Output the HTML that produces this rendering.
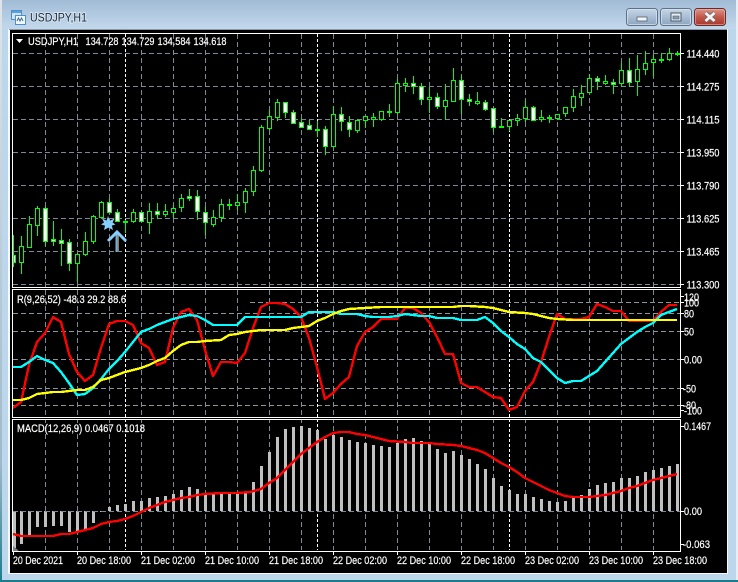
<!DOCTYPE html>
<html><head><meta charset="utf-8"><title>USDJPY,H1</title>
<style>
html,body{margin:0;padding:0;background:#bcd6ec}
svg{display:block}
text{font-family:"Liberation Sans",sans-serif;font-size:11px;fill:#fff;stroke:#fff;stroke-width:.2px}
</style></head><body>
<svg xmlns="http://www.w3.org/2000/svg" width="738" height="582" viewBox="0 0 738 582">
<defs>
<linearGradient id="tb" x1="0" y1="0" x2="0" y2="1"><stop offset="0" stop-color="#a2bbd6"/><stop offset="1" stop-color="#c2d8ec"/></linearGradient>
<linearGradient id="btn" x1="0" y1="0" x2="0" y2="1"><stop offset="0" stop-color="#c6d6e6"/><stop offset=".5" stop-color="#a9bed4"/><stop offset="1" stop-color="#8aa3bf"/></linearGradient>
<linearGradient id="cls" x1="0" y1="0" x2="0" y2="1"><stop offset="0" stop-color="#dc9a8e"/><stop offset=".5" stop-color="#c2584a"/><stop offset="1" stop-color="#a8352a"/></linearGradient>
<linearGradient id="lft" x1="0" y1="0" x2="0" y2="1"><stop offset="0" stop-color="#dfe5ea"/><stop offset=".8" stop-color="#9fb8c8"/><stop offset="1" stop-color="#1a7c8c"/></linearGradient>
</defs>

<!-- window chrome -->
<rect width="738" height="582" fill="#bcd6ec"/>
<rect x="0" y="0" width="738" height="29" fill="url(#tb)"/>
<rect x="0" y="0" width="2" height="582" fill="url(#lft)"/>
<rect x="736" y="0" width="2" height="582" fill="#e8eef3"/>
<rect x="2" y="580" width="736" height="2" fill="#1a7c8c"/>
<rect x="2" y="29" width="7" height="551" fill="#bcd6ec"/>
<rect x="8" y="29" width="720" height="545" fill="#fff" opacity=".85"/>
<rect x="9" y="29" width="718" height="1" fill="#8b97a3"/>
<rect x="10" y="30" width="717" height="543" fill="#000"/>

<!-- app icon -->
<g shape-rendering="crispEdges">
<rect x="11.500" y="10.500" width="10" height="9" fill="#cfe3f5" stroke="#4f8fc8"/>
<rect x="12" y="11" width="9" height="2" fill="#5ba0dc"/>
<rect x="15.500" y="15.500" width="10" height="9" fill="#f2f7fb" stroke="#4f8fc8"/>
</g>
<path d="M17 21l1.500-3 1.500 3 1.500-3 1.500 3" fill="none" stroke="#3b6f9e"/>

<!-- title -->
<text x="30" y="21.500" textLength="57" lengthAdjust="spacingAndGlyphs" style="font-size:12px;fill:#1c2733;stroke:#d6e6f4;stroke-width:2px;paint-order:stroke">USDJPY,H1</text>

<!-- buttons -->
<rect x="626.500" y="8.500" width="31" height="17" rx="3" fill="url(#btn)" stroke="#5e7186"/>
<rect x="627.500" y="9.500" width="29" height="15" rx="2" fill="none" stroke="#dce7f1" opacity=".7"/>
<rect x="637" y="17" width="10" height="4" fill="#f2f5f8" stroke="#55606c" stroke-width=".8"/>
<rect x="660.500" y="8.500" width="31" height="17" rx="3" fill="url(#btn)" stroke="#5e7186"/>
<rect x="661.500" y="9.500" width="29" height="15" rx="2" fill="none" stroke="#dce7f1" opacity=".7"/>
<rect x="671" y="13" width="10" height="8" fill="#e8eef4" stroke="#4d5864"/>
<rect x="673" y="16" width="6" height="3" fill="#8aa0b6" stroke="#4d5864" stroke-width=".6"/>
<rect x="694.500" y="8.500" width="31" height="17" rx="3" fill="url(#cls)" stroke="#6b2a2a"/>
<rect x="695.500" y="9.500" width="29" height="15" rx="2" fill="none" stroke="#eab7ae" opacity=".6"/>
<path d="M705.500 13l9 8M714.500 13l-9 8" stroke="#6a6a6a" stroke-width="4.500" fill="none"/>
<path d="M705.500 13l9 8M714.500 13l-9 8" stroke="#f4f4f4" stroke-width="2.800" fill="none"/>

<g shape-rendering="crispEdges">
<!-- horizontal grid main -->
<path d="M13 53.500H680M13 86.500H680M13 119.500H680M13 152.500H680M13 185.500H680M13 218.500H680M13 251.500H680M13 284.500H680" stroke="#7d8996" fill="none" stroke-dasharray="5 3"/>
<!-- horizontal grid RVI -->
<path d="M250 302.500H680M13 313.500H680M13 331.500H680M13 359.500H680M13 388.500H680M13 405.500H680" stroke="#8e959c" fill="none" stroke-dasharray="5 3"/>
<!-- vertical grid -->
<path d="M45.500 34V550M77.500 34V550M109.500 34V550M141.500 34V550M173.500 34V550M205.500 34V550M237.500 34V550M269.500 34V550M301.500 34V550M333.500 34V550M365.500 34V550M397.500 34V550M429.500 34V550M461.500 34V550M493.500 34V550M525.500 34V550M557.500 34V550M589.500 34V550M621.500 34V550M653.500 34V550" stroke="#7d8996" fill="none" stroke-dasharray="5 3"/>
<path d="M125.500 34V550M317.500 34V550M509.500 34V550" stroke="#fff" fill="none" stroke-dasharray="3 2"/>

<!-- wicks -->
<path stroke="#00ff00" fill="none" d="M13.500 235V267M21.500 236V274M29.500 216V247M37.500 206V236M45.500 206V246M53.500 221V246M61.500 229V266M69.500 239V271M77.500 253V282M85.500 232V256M93.500 215V244M101.500 201V218M109.500 199V213M117.500 209V222M125.500 220V233M133.500 209V223M141.500 211V222M149.500 203V234M157.500 203V219M165.500 204V217M173.500 205V218M181.500 194V212M189.500 189V201M197.500 190V220M205.500 207V235M213.500 210V227M221.500 199V222M229.500 199V210M237.500 194V210M245.500 188V213M253.500 166V196M261.500 125V172M269.500 110V130M277.500 99V121M285.500 102V118M293.500 110V123M301.500 118V128M309.500 120V130M317.500 121V137M325.500 126V155M333.500 106V146M341.500 107V131M349.500 116V137M357.500 119V133M365.500 116V128M373.500 113V127M381.500 111V121M389.500 104V117M397.500 79V114M405.500 78V92M413.500 76V94M421.500 83V105M429.500 87V113M437.500 93V109M445.500 84V120M453.500 68V101M461.500 75V114M469.500 94V106M477.500 92V105M485.500 100V111M493.500 108V132M501.500 118V127M509.500 120V131M517.500 114V126M525.500 100V122M533.500 106V121M541.500 110V122M549.500 115V123M557.500 114V120M565.500 107V117M573.500 89V112M581.500 85V106M589.500 74V93M597.500 76V90M605.500 75V85M613.500 79V94M621.500 63V87M629.500 58V87M637.500 55V96M645.500 51V75M653.500 55V77M661.500 53V63M669.500 48V61M677.500 51V56"/>

<!-- hollow bodies -->
<path fill="#000" stroke="#00ff00" d="M19.500 246.500h4V262.500h-4zM27.500 224.500h4V247.500h-4zM35.500 208.500h4V225.500h-4zM75.500 254.500h4V263.500h-4zM83.500 241.500h4V254.500h-4zM91.500 216.500h4V241.500h-4zM99.500 202.500h4V217.500h-4zM123.500 221.500h4V222.500h-4zM131.500 212.500h4V221.500h-4zM147.500 211.500h4V222.500h-4zM163.500 211.500h4V214.500h-4zM171.500 208.500h4V212.500h-4zM179.500 198.500h4V207.500h-4zM211.500 217.500h4V224.500h-4zM219.500 204.500h4V217.500h-4zM227.500 204.500h4V205.500h-4zM235.500 202.500h4V205.500h-4zM243.500 191.500h4V202.500h-4zM251.500 170.500h4V191.500h-4zM259.500 127.500h4V170.500h-4zM267.500 116.500h4V128.500h-4zM275.500 102.500h4V117.500h-4zM315.500 129.500h4V130.500h-4zM331.500 114.500h4V146.500h-4zM355.500 120.500h4V130.500h-4zM363.500 116.500h4V120.500h-4zM371.500 117.500h4V119.500h-4zM379.500 111.500h4V119.500h-4zM387.500 111.500h4V112.500h-4zM395.500 83.500h4V112.500h-4zM403.500 83.500h4V85.500h-4zM427.500 97.500h4V99.500h-4zM443.500 100.500h4V106.500h-4zM451.500 80.500h4V101.500h-4zM475.500 101.500h4V103.500h-4zM499.500 126.500h4V127.500h-4zM507.500 120.500h4V126.500h-4zM515.500 118.500h4V120.500h-4zM523.500 107.500h4V118.500h-4zM539.500 117.500h4V119.500h-4zM547.500 117.500h4V118.500h-4zM555.500 114.500h4V118.500h-4zM563.500 107.500h4V113.500h-4zM571.500 96.500h4V107.500h-4zM579.500 93.500h4V97.500h-4zM587.500 78.500h4V92.500h-4zM603.500 81.500h4V83.500h-4zM619.500 70.500h4V83.500h-4zM635.500 69.500h4V81.500h-4zM643.500 63.500h4V69.500h-4zM651.500 59.500h4V62.500h-4zM659.500 59.500h4V60.500h-4zM667.500 53.500h4V59.500h-4zM675.500 53.500h4V54.500h-4z"/>

<!-- white bodies -->
<path fill="#fff" stroke="#00ff00" d="M13.500 255.500h2V262.500h-2zM43.500 208.500h4V241.500h-4zM51.500 239.500h4V241.500h-4zM59.500 240.500h4V243.500h-4zM67.500 242.500h4V263.500h-4zM107.500 202.500h4V212.500h-4zM115.500 212.500h4V221.500h-4zM139.500 212.500h4V221.500h-4zM155.500 211.500h4V214.500h-4zM187.500 196.500h4V198.500h-4zM195.500 196.500h4V211.500h-4zM203.500 212.500h4V222.500h-4zM283.500 102.500h4V112.500h-4zM291.500 112.500h4V123.500h-4zM299.500 122.500h4V127.500h-4zM307.500 125.500h4V129.500h-4zM323.500 129.500h4V146.500h-4zM339.500 114.500h4V121.500h-4zM347.500 122.500h4V129.500h-4zM411.500 83.500h4V86.500h-4zM419.500 86.500h4V99.500h-4zM435.500 97.500h4V106.500h-4zM459.500 80.500h4V99.500h-4zM467.500 99.500h4V101.500h-4zM483.500 102.500h4V109.500h-4zM491.500 108.500h4V127.500h-4zM531.500 107.500h4V120.500h-4zM595.500 78.500h4V81.500h-4zM611.500 82.500h4V84.500h-4zM627.500 70.500h4V82.500h-4z"/>
</g>

<!-- star and arrow -->
<polygon points="108,216 109.800,220.600 114.500,218.500 112.600,222.500 115.500,224.500 111.800,225.600 113,230 108.500,227.600 104,230 105,225.600 101,224.500 104,222.500 102,218.500 106.500,220.600" fill="#87cefa"/>
<path d="M117.500 234V252" stroke="#8a7a55" stroke-width="3" fill="none"/>
<path d="M116.500 234V252" stroke="#6fb0e4" stroke-width="2" fill="none"/>
<path d="M108 241L117 232L126 241" stroke="#87cefa" stroke-width="3" fill="none"/>

<g shape-rendering="crispEdges" fill="none">
<!-- RVI lines -->
<polyline stroke="#ff0000" stroke-width="2.400" stroke-linejoin="round" points="13,408 21,402 29,365 37,342 45,333 53,317 61,322 69,354 77,372 85,381 93,375 101,348 109,324 117,321 125,321 133,325 141,343 149,348 157,365 165,362 173,328 181,312 189,309 197,320 205,350 213,376 221,362 229,362 237,363 245,353 253,328 261,307 269,303 277,303 285,304 293,309 301,317 309,338 317,367 325,399 333,393 341,384 349,377 357,346 365,332 373,327 381,319 389,319 397,319 405,308 413,308 421,313 429,322 437,337 445,354 453,354 461,383 469,387 477,387 485,392 493,397 501,398 509,410 517,407 525,391 533,382 541,362 549,337 557,314 565,319 573,319 581,319 589,317 597,304 605,307 613,311 621,311 629,321 653,321 661,312 669,305 677,305"/>
<polyline stroke="#00ffff" stroke-width="2.400" stroke-linejoin="round" points="13,367 21,367 29,362 37,356 45,360 53,363 61,372 69,383 77,395 85,394 93,388 101,379 109,369 117,361 125,352 133,342 141,332 149,329 157,325 165,322 173,319 181,317 189,315 197,316 205,320 213,325 221,325 229,325 237,325 245,317 253,317 301,317 309,312 317,312 333,312 341,314 357,314 365,316 373,317 389,317 397,316 405,314 413,315 421,316 429,316 437,318 453,318 461,320 477,320 485,317 493,323 501,331 509,337 517,344 525,349 533,358 541,362 549,370 557,378 565,383 573,381 581,381 589,376 597,371 605,362 613,353 621,344 629,338 637,332 645,327 653,323 661,315 669,312 677,309"/>
<polyline stroke="#ffff00" stroke-width="2.400" stroke-linejoin="round" points="13,400 21,400 29,398 37,394 45,393 53,392 61,392 69,391 77,390 85,390 93,387 101,380 109,378 117,375 125,372 133,370 141,368 149,365 157,361 165,358 173,351 181,345 189,342 197,342 205,341 221,340 229,335 237,334 245,332 253,331 261,330 285,330 293,328 301,327 309,326 317,321 325,318 333,314 341,311 349,309 365,308 381,307 453,307 461,306 469,306 485,307 493,308 501,310 509,312 525,313 533,314 541,316 549,318 557,319 573,320 677,320"/>

<!-- MACD histogram -->
<path stroke="#c0c0c0" stroke-width="3" d="M14.500 511V548M21.500 511V544M29.500 511V535M37.500 511V527M45.500 511V527M53.500 511V526M61.500 511V526M69.500 511V532M77.500 511V532M85.500 511V530M93.500 511V523M101.500 511V512M109.500 511V507M117.500 511V505M125.500 511V504M133.500 511V501M141.500 511V501M149.500 511V498M157.500 511V497M165.500 511V496M173.500 511V494M181.500 511V490M189.500 511V487M197.500 511V489M205.500 511V493M213.500 511V493M221.500 511V493M229.500 511V493M237.500 511V493M245.500 511V491M253.500 511V482M261.500 511V466M269.500 511V452M277.500 511V437M285.500 511V429M293.500 511V427M301.500 511V426M309.500 511V428M317.500 511V430M325.500 511V439M333.500 511V435M341.500 511V437M349.500 511V440M357.500 511V442M365.500 511V443M373.500 511V445M381.500 511V446M389.500 511V447M397.500 511V443M405.500 511V439M413.500 511V438M421.500 511V441M429.500 511V443M437.500 511V449M445.500 511V453M453.500 511V451M461.500 511V455M469.500 511V459M477.500 511V464M485.500 511V469M493.500 511V478M501.500 511V486M509.500 511V490M517.500 511V494M525.500 511V494M533.500 511V497M541.500 511V499M549.500 511V501M557.500 511V502M565.500 511V501M573.500 511V498M581.500 511V495M589.500 511V489M597.500 511V485M605.500 511V483M613.500 511V482M621.500 511V478M629.500 511V478M637.500 511V476M645.500 511V472M653.500 511V470M661.500 511V468M669.500 511V466M677.500 511V464"/>
<path d="M13 511.500H680" stroke="#7d8996" stroke-dasharray="5 3"/>
<polygon points="13,546 13,551 19,551" fill="#77828f"/>
<polyline stroke="#ff0000" stroke-width="2.400" stroke-linejoin="round" points="13,534 21,536 29,536 45,536 53,536 61,534 69,534 77,532 85,530 93,528 101,524 109,522 117,521 125,519 133,516 141,512 149,508 157,505 165,502 173,500 181,498 189,497 197,495 205,494 221,493 237,493 250,492 261,489 269,483 277,478 285,470 293,462 301,454 309,448 317,442 325,437 333,433 341,432 349,432 357,434 365,435 373,437 381,439 389,441 405,442 413,443 429,443 437,444 453,445 461,446 469,448 477,450 485,453 493,458 501,463 509,467 517,472 525,478 533,482 541,486 549,490 557,493 565,496 573,497 589,497 597,496 605,495 613,493 621,491 629,488 637,486 645,483 653,480 661,478 669,476 677,474"/>

<!-- frames -->
<rect x="10" y="288" width="672" height="1" fill="#000" stroke="none"/>
<rect x="10" y="418" width="672" height="1" fill="#000" stroke="none"/>
<rect x="12.500" y="33.500" width="668" height="254" stroke="#fff"/>
<rect x="12.500" y="289.500" width="668" height="128" stroke="#fff"/>
<rect x="12.500" y="419.500" width="668" height="132" stroke="#fff"/>

<!-- ticks -->
<path stroke="#fff" d="M681 53.500h3M681 86.500h3M681 119.500h3M681 152.500h3M681 185.500h3M681 218.500h3M681 251.500h3M681 284.500h3M681 296.500h3M681 302.500h3M681 313.500h3M681 331.500h3M681 359.500h3M681 388.500h3M681 405.500h3M681 410.500h3M681 426.500h3M681 511.500h3M681 544.500h3M13.500 552v3M77.500 552v3M141.500 552v3M205.500 552v3M269.500 552v3M333.500 552v3M397.500 552v3M461.500 552v3M525.500 552v3M589.500 552v3M653.500 552v3"/>
</g>

<!-- legend triangle -->
<polygon points="16,39 23,39 19.500,43" fill="#fff"/>

<!-- legends -->
<text x="28" y="45" textLength="50" lengthAdjust="spacingAndGlyphs">USDJPY,H1</text>
<text x="85.500" y="45" textLength="33" lengthAdjust="spacingAndGlyphs">134.728</text>
<text x="121.500" y="45" textLength="33" lengthAdjust="spacingAndGlyphs">134.729</text>
<text x="157.500" y="45" textLength="33" lengthAdjust="spacingAndGlyphs">134.584</text>
<text x="193.500" y="45" textLength="33" lengthAdjust="spacingAndGlyphs">134.618</text>
<text x="17" y="303" textLength="109" lengthAdjust="spacingAndGlyphs">R(9,26,52) -48.3 29.2 88.6</text>
<text x="17" y="432" textLength="128" lengthAdjust="spacingAndGlyphs">MACD(12,26,9) 0.0467 0.1018</text>

<!-- price scale -->
<text x="686.500" y="57.500" textLength="33" lengthAdjust="spacingAndGlyphs">114.440</text>
<text x="686.500" y="90.500" textLength="33" lengthAdjust="spacingAndGlyphs">114.275</text>
<text x="686.500" y="123.500" textLength="33" lengthAdjust="spacingAndGlyphs">114.115</text>
<text x="686.500" y="156.500" textLength="33" lengthAdjust="spacingAndGlyphs">113.950</text>
<text x="686.500" y="189.500" textLength="33" lengthAdjust="spacingAndGlyphs">113.790</text>
<text x="686.500" y="222.500" textLength="33" lengthAdjust="spacingAndGlyphs">113.625</text>
<text x="686.500" y="255.500" textLength="33" lengthAdjust="spacingAndGlyphs">113.465</text>
<text x="686.500" y="288.500" textLength="33" lengthAdjust="spacingAndGlyphs">113.300</text>

<!-- RVI scale -->
<text x="684" y="301" textLength="15" lengthAdjust="spacingAndGlyphs">120</text>
<text x="684" y="306.500" textLength="15" lengthAdjust="spacingAndGlyphs">100</text>
<text x="684" y="317.500" textLength="10" lengthAdjust="spacingAndGlyphs">80</text>
<text x="684" y="335.500" textLength="10" lengthAdjust="spacingAndGlyphs">50</text>
<text x="684" y="363.500" textLength="18" lengthAdjust="spacingAndGlyphs">0.00</text>
<text x="683" y="392.500" textLength="13" lengthAdjust="spacingAndGlyphs">-50</text>
<text x="683" y="409" textLength="13" lengthAdjust="spacingAndGlyphs">-80</text>
<text x="684" y="414.500" textLength="18" lengthAdjust="spacingAndGlyphs">-100</text>

<!-- MACD scale -->
<text x="684" y="430" textLength="27" lengthAdjust="spacingAndGlyphs">0.1467</text>
<text x="684" y="515" textLength="18" lengthAdjust="spacingAndGlyphs">0.00</text>
<text x="683" y="548" textLength="27" lengthAdjust="spacingAndGlyphs">-0.063</text>

<!-- time scale -->
<text x="13" y="564" textLength="50" lengthAdjust="spacingAndGlyphs">20 Dec 2021</text>
<text x="77" y="564" textLength="54" lengthAdjust="spacingAndGlyphs">20 Dec 18:00</text>
<text x="141" y="564" textLength="54" lengthAdjust="spacingAndGlyphs">21 Dec 02:00</text>
<text x="205" y="564" textLength="54" lengthAdjust="spacingAndGlyphs">21 Dec 10:00</text>
<text x="269" y="564" textLength="54" lengthAdjust="spacingAndGlyphs">21 Dec 18:00</text>
<text x="333" y="564" textLength="54" lengthAdjust="spacingAndGlyphs">22 Dec 02:00</text>
<text x="397" y="564" textLength="54" lengthAdjust="spacingAndGlyphs">22 Dec 10:00</text>
<text x="461" y="564" textLength="54" lengthAdjust="spacingAndGlyphs">22 Dec 18:00</text>
<text x="525" y="564" textLength="54" lengthAdjust="spacingAndGlyphs">23 Dec 02:00</text>
<text x="589" y="564" textLength="54" lengthAdjust="spacingAndGlyphs">23 Dec 10:00</text>
<text x="653" y="564" textLength="54" lengthAdjust="spacingAndGlyphs">23 Dec 18:00</text>
</svg>
</body></html>
